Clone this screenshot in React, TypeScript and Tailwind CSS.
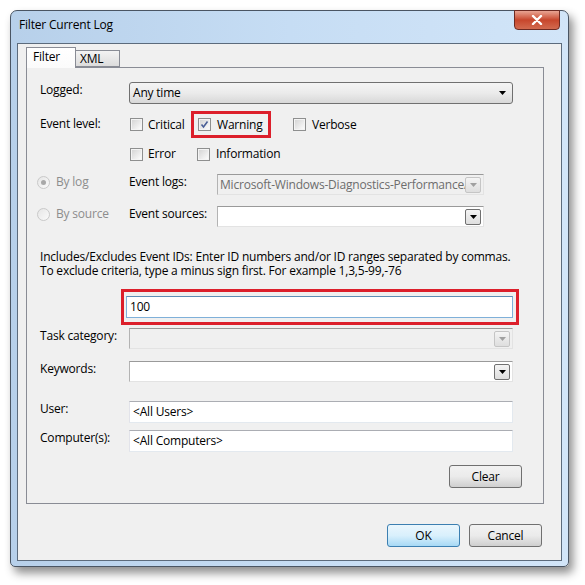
import React from "react";

function CheckBox({ checked = false }: { checked?: boolean }) {
  return (
    <div className="w-[13px] h-[13px] border border-[#8e8f8f] bg-[#f4f4f4] p-px shrink-0">
      <div className="w-full h-full bg-gradient-to-br from-[#d6d6d6] to-[#fbfbfb] flex items-center justify-center">
        {checked && (
          <svg width="9" height="9" viewBox="0 0 9 9">
            <path d="M1.5 4.5 L3.5 7 L7.5 1.5" fill="none" stroke="#4a5f97" strokeWidth="1.6" />
          </svg>
        )}
      </div>
    </div>
  );
}

function Radio({ checked = false }: { checked?: boolean }) {
  return (
    <div className="w-[13px] h-[13px] rounded-full border border-[#c9c9c9] bg-gradient-to-br from-[#e6e6e6] to-[#fafafa] flex items-center justify-center shrink-0">
      {checked && <div className="w-[5px] h-[5px] rounded-full bg-[#a8a8a8]" />}
    </div>
  );
}

function DropBtn({ disabled = false }: { disabled?: boolean }) {
  return (
    <div
      className={
        "w-[16px] h-[16px] rounded-[2px] border flex items-center justify-center bg-gradient-to-b from-[#f4f4f4] to-[#dedede] " +
        (disabled ? "border-[#c5c5c5]" : "border-[#707070]")
      }
    >
      <svg width="7" height="4" viewBox="0 0 7 4">
        <path d="M0 0 H7 L3.5 4 Z" fill={disabled ? "#a0a0a0" : "#000"} />
      </svg>
    </div>
  );
}

function Combo({
  text = "",
  disabled = false,
  w,
}: {
  text?: string;
  disabled?: boolean;
  w: string;
}) {
  return (
    <div
      className={
        "h-[21px] flex items-center border border-t-[#9a9a9a] border-l-[#b3b3b3] border-r-[#e3e3e3] border-b-[#e3e3e3] pr-[2px] " +
        (disabled ? "bg-[#f0f0f0] " : "bg-white ") +
        w
      }
    >
      <div className="flex-1 overflow-hidden whitespace-nowrap pl-[2px] text-[#6d6d6d]">{text}</div>
      <DropBtn disabled={disabled} />
    </div>
  );
}

function TextBox({ text, w, focused = false }: { text: string; w: string; focused?: boolean }) {
  return (
    <div
      className={
        "h-[22px] flex items-center bg-white border pl-[3px] " +
        (focused
          ? "border-[#7fb0d9] border-t-[#5e8db5] "
          : "border-t-[#abadb3] border-l-[#e2e3ea] border-r-[#e3e9ef] border-b-[#e3e9ef] ") +
        w
      }
    >
      {text}
    </div>
  );
}

function Button({ label, w, focused = false }: { label: string; w: string; focused?: boolean }) {
  return (
    <div
      className={
        "h-[23px] rounded-[3px] border flex items-center justify-center bg-gradient-to-b " +
        (focused
          ? "border-[#3c7fb1] from-[#eaf6fd] via-[#d9f0fc] to-[#a7d9f5] "
          : "border-[#707070] from-[#f2f2f2] via-[#ebebeb] to-[#cfcfcf] ") +
        w
      }
    >
      {label}
    </div>
  );
}

export default function App() {
  return (
    <div className="w-[585px] h-[585px] bg-white pl-[10px] pt-[10px] text-[12px] leading-[16px] tracking-[-0.2px] text-black [font-family:'Open_Sans',sans-serif]">
      <div className="w-[559px] h-[557px] rounded-t-[7px] rounded-b-[5px] border border-[#4a5563] bg-gradient-to-r from-[#b7d0ea] via-[#c6ddf4] to-[#d2e5f8] shadow-[4px_6px_10px_rgba(0,0,0,0.45)] flex flex-col px-[6px] pb-[5px]">
        {/* Title bar */}
        <div className="h-[32px] flex justify-between">
          <div className="pl-[2px] pt-[6px] text-[12px] text-black">Filter Current Log</div>
          <div className="w-[46px] h-[20px] -mt-px mr-[2px] rounded-b-[4px] border border-[#6d2a22] bg-gradient-to-b from-[#e8a493] via-[#c7462c] to-[#d26a4f] flex items-center justify-center">
            <svg width="12" height="10" viewBox="0 0 12 10">
              <path d="M2 1 L10 9 M10 1 L2 9" stroke="#fff" strokeWidth="2.4" strokeLinecap="round" />
            </svg>
          </div>
        </div>

        {/* Client area */}
        <div className="flex-1 border border-[#5c6b7c] bg-[#f0f0f0] flex flex-col pt-[2px] pl-[8px] pr-[17px]">
          {/* Tabs */}
          <div className="flex items-end h-[21px]">
            <div className="w-[50px] h-[21px] border border-b-0 border-[#898c95] bg-gradient-to-b from-white to-[#fbfbfb] pl-[6px] pt-[1px] relative z-10 -mb-px">
              Filter
            </div>
            <div className="w-[44px] h-[17px] border border-l-0 border-[#898c95] bg-gradient-to-b from-[#f3f3f3] to-[#dcdcdc] pl-[4px] leading-[16px]">
              XML
            </div>
          </div>

          {/* Panel */}
          <div className="w-[518px] border border-[#898c95] bg-[#f0f0f0] flex flex-col pl-[13px] pt-[14px] pb-[15px]">
            {/* Logged */}
            <div className="flex items-start">
              <div className="w-[89px]">Logged:</div>
              <div className="w-[384px] h-[22px] rounded-[3px] border border-[#707070] bg-gradient-to-b from-[#f4f4f4] via-[#ebebeb] to-[#d8d8d8] flex items-center pl-[3px] pr-[6px]">
                <div className="flex-1">Any time</div>
                <svg width="7" height="4" viewBox="0 0 7 4">
                  <path d="M0 0 H7 L3.5 4 Z" fill="#000" />
                </svg>
              </div>
            </div>

            {/* Event level row 1 */}
            <div className="flex mt-[7px] h-[27px] items-center">
              <div className="w-[89px] -mt-[1px]">Event level:</div>
              <div className="w-[62px] flex items-center pl-px">
                <CheckBox />
                <span className="ml-[5px]">Critical</span>
              </div>
              <div className="w-[80px] h-[27px] border-[3px] border-[#dc1f2b] flex items-center pl-[4px]">
                <CheckBox checked />
                <span className="ml-[6px]">Warning</span>
              </div>
              <div className="flex items-center ml-[22px]">
                <CheckBox />
                <span className="ml-[6px]">Verbose</span>
              </div>
            </div>

            {/* Event level row 2 */}
            <div className="flex mt-[3px] h-[26px] items-center">
              <div className="w-[89px]" />
              <div className="w-[68px] flex items-center pl-px">
                <CheckBox />
                <span className="ml-[5px]">Error</span>
              </div>
              <div className="flex items-center">
                <CheckBox />
                <span className="ml-[6px]">Information</span>
              </div>
            </div>

            {/* By log */}
            <div className="flex mt-[7px] h-[21px] items-start -ml-[3px]">
              <div className="w-[92px] h-[16px] flex items-center">
                <Radio checked />
                <span className="ml-[6px] text-[#8d8d8d]">By log</span>
              </div>
              <div className="w-[88px]">Event logs:</div>
              <Combo text="Microsoft-Windows-Diagnostics-Performance/Operational" disabled w="w-[267px]" />
            </div>

            {/* By source */}
            <div className="flex mt-[11px] h-[21px] items-start -ml-[3px]">
              <div className="w-[92px] h-[16px] flex items-center">
                <Radio />
                <span className="ml-[6px] text-[#8d8d8d]">By source</span>
              </div>
              <div className="w-[88px]">Event sources:</div>
              <Combo w="w-[267px]" />
            </div>

            {/* Description */}
            <div className="mt-[23px] leading-[14px] w-[482px]">
              Includes/Excludes Event IDs: Enter ID numbers and/or ID ranges separated by commas. To exclude
              criteria, type a minus sign first. For example 1,3,5-99,-76
            </div>

            {/* Event IDs */}
            <div className="mt-[11px] ml-[81px] w-[398px] h-[36px] border-[3px] border-[#dc1f2b] pl-[2px] pt-[4px]">
              <TextBox text="100" w="w-[387px]" focused />
            </div>

            {/* Task category */}
            <div className="flex items-start mt-[3px]">
              <div className="w-[89px]">Task category:</div>
              <Combo disabled w="w-[384px]" />
            </div>

            {/* Keywords */}
            <div className="flex items-start mt-[12px]">
              <div className="w-[89px]">Keywords:</div>
              <Combo w="w-[384px]" />
            </div>

            {/* User */}
            <div className="flex items-start mt-[19px]">
              <div className="w-[89px]">User:</div>
              <TextBox text="<All Users>" w="w-[384px]" />
            </div>

            {/* Computer */}
            <div className="flex items-start mt-[7px]">
              <div className="w-[89px]">Computer(s):</div>
              <TextBox text="<All Computers>" w="w-[384px]" />
            </div>

            {/* Clear */}
            <div className="flex justify-end mt-[13px] pr-[21px]">
              <Button label="Clear" w="w-[73px]" />
            </div>
          </div>

          {/* Bottom buttons */}
          <div className="flex justify-end gap-[9px] mt-[20px] mr-[2px]">
            <Button label="OK" w="w-[73px]" focused />
            <Button label="Cancel" w="w-[73px]" />
          </div>
        </div>
      </div>
    </div>
  );
}
